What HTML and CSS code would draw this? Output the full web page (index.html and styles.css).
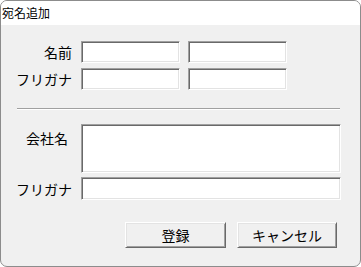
FILE: index.html
```html
<!DOCTYPE html>
<html lang="ja">
<head>
  <meta charset="UTF-8">
  <meta name="viewport" content="width=device-width, initial-scale=1.0">
  <title>宛名追加</title>
  <link rel="stylesheet" href="styles.css">
</head>
<body>
  <div class="window">
    <div class="titlebar">宛名追加</div>
    <div class="content">
      <div class="row">
        <label class="label">名前</label>
        <input class="field half" type="text">
        <input class="field half" type="text">
      </div>
      <div class="row row-next">
        <label class="label">フリガナ</label>
        <input class="field half" type="text">
        <input class="field half" type="text">
      </div>

      <div class="separator"></div>

      <div class="row row-company">
        <label class="label label-top">会社名</label>
        <textarea class="field wide area"></textarea>
      </div>
      <div class="row row-kana">
        <label class="label">フリガナ</label>
        <input class="field wide" type="text">
      </div>

      <div class="button-row">
        <button class="button">登録</button>
        <button class="button cancel">キャンセル</button>
      </div>
    </div>
  </div>
</body>
</html>
```

FILE: styles.css
```css
/* Global */
body {
  margin: 0;
  padding: 0;
  background-color: #fff;
  font-family: "Noto Sans CJK JP", "Noto Sans", sans-serif;
  color: #000;
}

/* Window frame */
.window {
  width: 359px;
  height: 265px;
  border: 1px solid #8c8c8c;
  border-radius: 7px;
  overflow: hidden;
  display: flex;
  flex-direction: column;
  background-color: #f0f0f0;
}

.titlebar {
  height: 24px;
  line-height: 23px;
  padding-left: 1px;
  background-color: #fff;
  font-size: 12px;
}

.content {
  flex: 1;
  padding-top: 16px;
}

/* Form rows */
.row {
  display: flex;
  align-items: center;
}

.row-next {
  margin-top: 5px;
}

.row-company {
  margin-top: 14px;
  align-items: flex-start;
}

.row-kana {
  margin-top: 4px;
}

.label {
  width: 71px;
  margin-right: 9px;
  text-align: right;
  font-size: 14px;
  line-height: 22px;
}

.label-top {
  width: 67px;
  margin-right: 13px;
  padding-top: 3px;
}

.field {
  box-sizing: border-box;
  height: 22px;
  margin: 0;
  padding: 0 3px;
  background-color: #fff;
  border: 1px solid;
  border-color: #a0a0a0 #fff #fff #a0a0a0;
  box-shadow: inset 1px 1px #696969, inset -1px -1px #e3e3e3;
  outline: none;
  font-family: inherit;
  font-size: 14px;
}

.half {
  width: 99px;
  margin-right: 8px;
}

.wide {
  width: 260px;
  height: 23px;
}

.area {
  height: 49px;
  resize: none;
}

.separator {
  width: 323px;
  margin: 18px 0 0 16px;
  border-top: 1px solid #a0a0a0;
  border-bottom: 1px solid #fff;
}

/* Buttons */
.button-row {
  display: flex;
  gap: 11px;
  margin: 22px 0 0 124px;
}

.button {
  box-sizing: border-box;
  width: 101px;
  height: 26px;
  padding: 0;
  background-color: #f0f0f0;
  border: 1px solid;
  border-color: #fff #696969 #696969 #fff;
  box-shadow: inset 1px 1px #e3e3e3, inset -1px -1px #a0a0a0;
  font-family: inherit;
  font-size: 14px;
  color: #000;
}

.button.cancel {
  width: 100px;
}
```
